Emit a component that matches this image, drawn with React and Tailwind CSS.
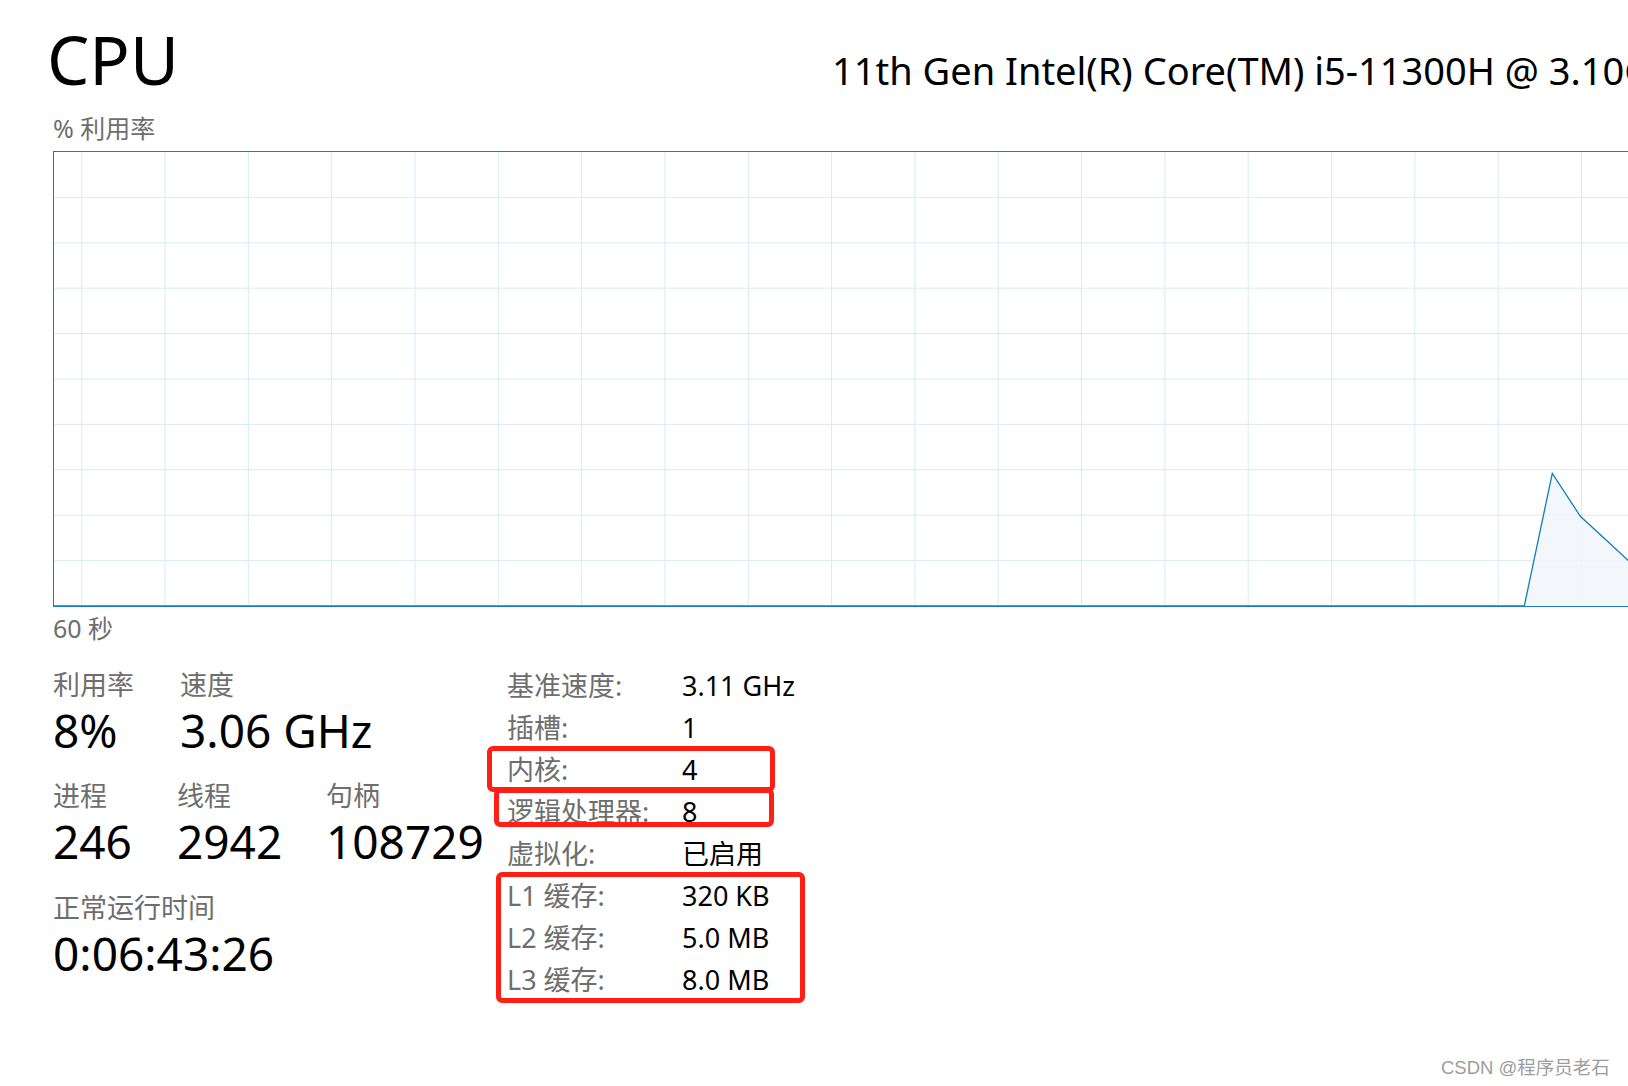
import React from "react"

const gridX = Array.from({ length: 21 }, (_, i) => 27.7 + i * 83.32)
const gridY = Array.from({ length: 9 }, (_, i) => 45.4 * (i + 1))

// cpu samples near the right edge, inner chart coords
const points = [
  [0, 454],
  [1470.3, 454],
  [1498.3, 321.3],
  [1526.3, 364.3],
  [1554.3, 390],
  [1582.3, 416],
  [1610.3, 438],
  [1638.3, 454],
]

const UsageChart = () => {
  const line = points.map((p) => p.join(",")).join(" ")
  const area = `${line} 1678,454 0,454`
  return (
    <div className="mt-[8px] ml-[53px] w-[1680px] h-[456px] border border-[#117dbb]">
      <svg width="1678" height="454" className="block">
        {gridX.map((x) => (
          <line key={"x" + x} x1={x} y1="0" x2={x} y2="454" stroke="#d9eaf4" strokeWidth="1" />
        ))}
        {gridY.map((y) => (
          <line key={"y" + y} x1="0" y1={y} x2="1678" y2={y} stroke="#d9eaf4" strokeWidth="1" />
        ))}
        <polygon points={area} fill="#f1f6fa" fillOpacity="0.85" />
        <polyline points={line} fill="none" stroke="#117dbb" strokeWidth="1.3" />
      </svg>
    </div>
  )
}

const Stat = ({ label, value, width }) => (
  <div className={width}>
    <div className="h-[36px] leading-[36px] text-[27px] text-[#6e6e6e]">{label}</div>
    <div className="h-[54px] leading-[54px] text-[46px] text-black">{value}</div>
  </div>
)

const details = [
  ["基准速度:", "3.11 GHz"],
  ["插槽:", "1"],
  ["内核:", "4"],
  ["逻辑处理器:", "8"],
  ["虚拟化:", "已启用"],
  ["L1 缓存:", "320 KB"],
  ["L2 缓存:", "5.0 MB"],
  ["L3 缓存:", "8.0 MB"],
]

export default function App() {
  return (
    <div className="relative w-[1628px] h-[1086px] overflow-hidden bg-white font-['Noto_Sans','Noto_Sans_CJK_SC',sans-serif]">
      {/* header */}
      <div className="flex items-baseline pt-[25px] pl-[47px] whitespace-nowrap">
        <div className="w-[785px] shrink-0 text-[67px] leading-[68px] text-black">CPU</div>
        <div className="text-[38px] leading-none text-black">11th Gen Intel(R) Core(TM) i5-11300H @ 3.10GHz</div>
      </div>

      <div className="mt-[20px] pl-[53px] h-[30px] leading-[30px] text-[25px] text-[#6e6e6e]">% 利用率</div>

      <UsageChart />

      <div className="mt-[6px] pl-[53px] h-[30px] leading-[30px] text-[25px] text-[#6e6e6e]">60 秒</div>

      {/* stats */}
      <div className="mt-[22px] flex">
        <div className="w-[507px] shrink-0 pl-[53px] pt-[2px]">
          <div className="flex">
            <Stat label="利用率" value="8%" width="w-[127px]" />
            <Stat label="速度" value="3.06 GHz" />
          </div>
          <div className="flex mt-[21px]">
            <Stat label="进程" value="246" width="w-[124px]" />
            <Stat label="线程" value="2942" width="w-[149px]" />
            <Stat label="句柄" value="108729" />
          </div>
          <div className="mt-[22px]">
            <Stat label="正常运行时间" value="0:06:43:26" />
          </div>
        </div>

        <div className="relative">
          {details.map(([k, v]) => (
            <div key={k} className="flex h-[42px] leading-[42px] text-[27px]">
              <div className="w-[175px] text-[#6e6e6e]">{k}</div>
              <div className="text-black">{v}</div>
            </div>
          ))}
          {/* annotation boxes */}
          <div className="absolute left-[-20px] top-[81px] w-[288px] h-[46px] border-[5px] border-[#ff1f14] rounded-[6px]" />
          <div className="absolute left-[-13px] top-[123px] w-[280px] h-[39px] border-[5px] border-[#ff1f14] rounded-[6px]" />
          <div className="absolute left-[-11px] top-[207px] w-[309px] h-[131px] border-[5px] border-[#ff1f14] rounded-[6px]" />
        </div>
      </div>

      <div className="absolute left-[1441px] top-[1057px] text-[18.5px] leading-[22px] text-[#9d9d9d] whitespace-nowrap font-['Liberation_Sans','Noto_Sans_CJK_SC',sans-serif]">
        CSDN @程序员老石
      </div>
    </div>
  )
}
